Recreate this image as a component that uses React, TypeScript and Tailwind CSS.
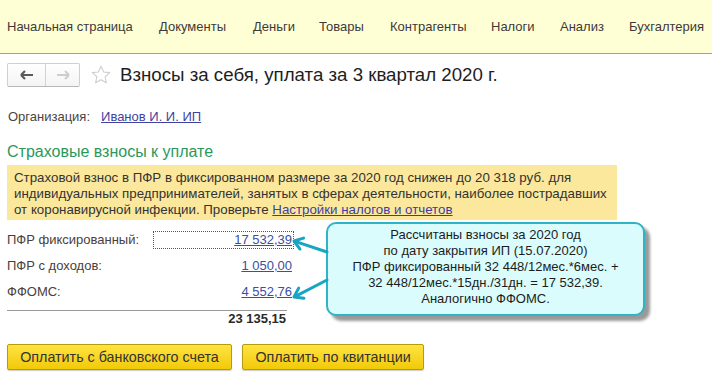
import React from "react";

const navItems: [string, string][] = [
  ["Начальная страница", "w-[152px]"],
  ["Документы", "w-[94px]"],
  ["Деньги", "w-[66px]"],
  ["Товары", "w-[71px]"],
  ["Контрагенты", "w-[101px]"],
  ["Налоги", "w-[69px]"],
  ["Анализ", "w-[69px]"],
  ["Бухгалтерия", "w-[90px]"],
];

const rows = [
  { label: "ПФР фиксированный:", value: "17 532,39", focus: true },
  { label: "ПФР с доходов:", value: "1 050,00", focus: false },
  { label: "ФФОМС:", value: "4 552,76", focus: false },
];

// arrow from tail to tip, with an open head
const Arrow = ({ x1, y1, x2, y2 }: { x1: number; y1: number; x2: number; y2: number }) => {
  const len = Math.hypot(x1 - x2, y1 - y2);
  const bx = (x1 - x2) / len;
  const by = (y1 - y2) / len;
  const a = (35 * Math.PI) / 180;
  const h = 10;
  const p1 = [x2 + h * (bx * Math.cos(a) - by * Math.sin(a)), y2 + h * (bx * Math.sin(a) + by * Math.cos(a))];
  const p2 = [x2 + h * (bx * Math.cos(a) + by * Math.sin(a)), y2 + h * (-bx * Math.sin(a) + by * Math.cos(a))];
  return (
    <g stroke="#17a5c3" strokeWidth="3" fill="none" strokeLinecap="round" strokeLinejoin="round">
      <line x1={x1} y1={y1} x2={x2 + bx} y2={y2 + by} />
      <polyline points={`${p1[0]},${p1[1]} ${x2},${y2} ${p2[0]},${p2[1]}`} />
    </g>
  );
};

export default function App() {
  return (
    <div className="relative w-[712px] h-[379px] overflow-hidden bg-white font-['Liberation_Sans',Arial,sans-serif] text-[13px] leading-[16px]">
      {/* top menu */}
      <div className="h-[54px] bg-[#ffffd6] border-b border-[#a3a38c] flex items-center pl-[7px] pt-[1px] text-[#403a36] text-[13px]">
        {navItems.map(([label, w]) => (
          <div key={label} className={`${w} shrink-0 whitespace-nowrap`}>
            {label}
          </div>
        ))}
      </div>

      <div className="px-[7px]">
        {/* header */}
        <div className="mt-[9px] h-[24px] flex items-center">
          <div className="flex h-[24px] w-[73px] border border-[#cfcfcf] border-b-[#b8b8b8] rounded-[2px] bg-linear-to-b from-white to-[#f4f4f4]">
            <div className="w-[38px] flex items-center justify-center border-r border-[#d2d2d2]">
              <svg width="14" height="10" viewBox="0 0 14 10">
                <path d="M1 5h12M1 5l4-4M1 5l4 4" stroke="#5a5a5a" strokeWidth="2.2" fill="none" />
              </svg>
            </div>
            <div className="flex-1 flex items-center justify-center">
              <svg width="14" height="10" viewBox="0 0 14 10">
                <path d="M1 5h12M13 5l-4-4M13 5l-4 4" stroke="#cdcdcd" strokeWidth="2" fill="none" />
              </svg>
            </div>
          </div>
          <svg className="ml-[10px]" width="22" height="22" viewBox="0 0 24 24">
            <path
              d="M12 2.5l2.9 6.2 6.6.7-5 4.5 1.4 6.6L12 17.2l-5.9 3.3 1.4-6.6-5-4.5 6.6-.7z"
              fill="none"
              stroke="#cfcfcf"
              strokeWidth="1.2"
              strokeLinejoin="round"
            />
          </svg>
          <div className="ml-[8px] text-[18.7px] leading-[22px] text-[#1e1e1e] whitespace-nowrap">
            Взносы за себя, уплата за 3 квартал 2020 г.
          </div>
        </div>

        {/* organization */}
        <div className="mt-[22px] flex h-[16px] items-center">
          <span className="pl-[1px] text-[#4a4441]">Организация:</span>
          <a className="ml-[11px] text-[#3f43a0] underline">Иванов И. И. ИП</a>
        </div>

        {/* section */}
        <div className="mt-[17px] text-[16px] leading-[20px] text-[#2b985b]">Страховые взносы к уплате</div>
        <div className="mt-[3px] w-[610px] h-[55px] bg-[#fbe89d] pl-[7px] pt-[5px] text-[13.3px] text-[#333333] whitespace-nowrap">
          <div>Страховой взнос в ПФР в фиксированном размере за 2020 год снижен до 20 318 руб. для</div>
          <div>индивидуальных предпринимателей, занятых в сферах деятельности, наиболее пострадавших</div>
          <div>
            от коронавирусной инфекции. Проверьте <a className="text-[#3b3fa0] underline">Настройки налогов и отчетов</a>
          </div>
        </div>

        {/* amounts */}
        <div className="mt-[11px] flex flex-col gap-[8px]">
          {rows.map((r) => (
            <div key={r.label} className="flex h-[18px] items-center">
              <div className="w-[146px] text-[#4b403b]">{r.label}</div>
              <div
                className={`w-[141px] h-[18px] flex items-center justify-end pr-[1px] ${
                  r.focus ? "border border-dotted border-[#555]" : "border border-transparent"
                }`}
              >
                <a className="text-[#3a4fa0] underline">{r.value}</a>
              </div>
            </div>
          ))}
        </div>
        <div className="mt-[9px] w-[280px] border-t border-[#9a9a9a]" />
        <div className="w-[280px] text-right pr-[1px] font-bold text-[#2a2a2a] h-[16px]">23 135,15</div>

        {/* buttons */}
        <div className="mt-[17px] flex gap-[10px]">
          <button className="w-[225px] h-[26px] border border-[#b59b12] rounded-[2px] bg-linear-to-b from-[#ffe33c] to-[#f2ca00] text-[#333] text-[14.3px] shadow-[0_1px_1px_rgba(0,0,0,0.2)]">
            Оплатить с банковского счета
          </button>
          <button className="w-[182px] h-[26px] border border-[#b59b12] rounded-[2px] bg-linear-to-b from-[#ffe33c] to-[#f2ca00] text-[#333] text-[14.3px] shadow-[0_1px_1px_rgba(0,0,0,0.2)]">
            Оплатить по квитанции
          </button>
        </div>
      </div>

      {/* callout overlay */}
      <div className="absolute left-[326px] top-[222px] w-[319px] h-[94px] rounded-[10px] border-2 border-[#2fb3c6] bg-[#dafcfc] shadow-[5px_5px_3px_rgba(0,0,0,0.4)] pt-[3px] text-center text-[#1c1c1c]">
        <div>Рассчитаны взносы за 2020 год</div>
        <div>по дату закрытия ИП (15.07.2020)</div>
        <div>ПФР фиксированный 32 448/12мес.*6мес. +</div>
        <div>32 448/12мес.*15дн./31дн. = 17 532,39.</div>
        <div>Аналогично ФФОМС.</div>
      </div>
      <svg className="absolute left-0 top-0 pointer-events-none" width="712" height="379">
        <Arrow x1={327} y1={252} x2={294} y2={241} />
        <Arrow x1={327} y1={280} x2={294} y2={297} />
      </svg>
    </div>
  );
}
